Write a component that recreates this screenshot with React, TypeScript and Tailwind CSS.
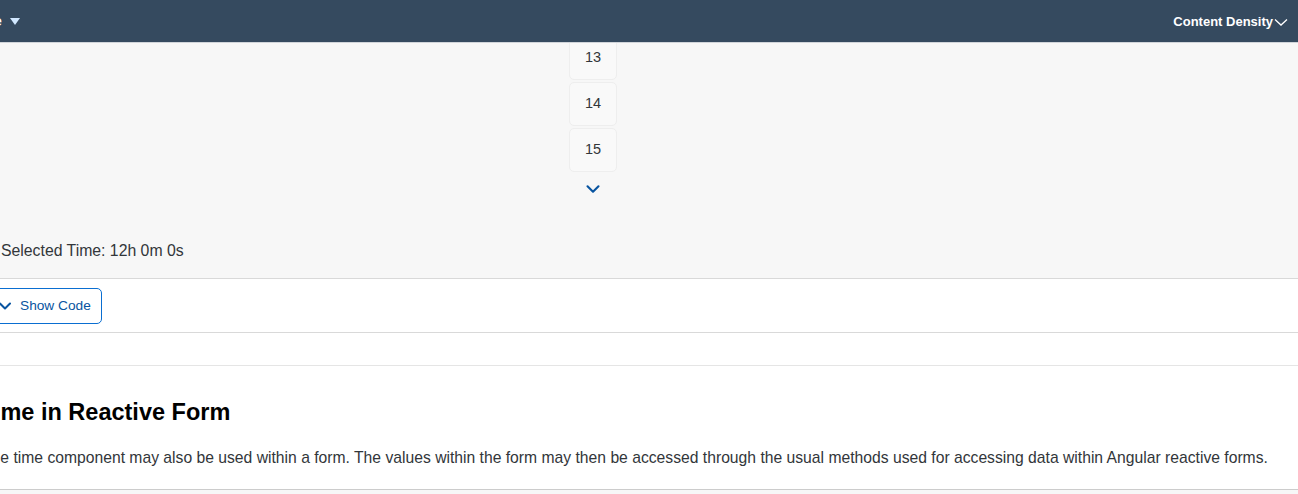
import { ChevronDown } from "lucide-react";

const font = { fontFamily: "'Liberation Sans', Arial, sans-serif" };

function TimeCell({ value, first }: { value: string; first?: boolean }) {
  return (
    <div
      className={`flex h-[44px] w-[48px] items-center justify-center rounded-[5px] border border-[#eeeeee] bg-[#f9f9f9] text-[14.5px] text-[#32363a] ${first ? "-mt-[7px]" : ""}`}
    >
      {value}
    </div>
  );
}

export default function App() {
  return (
    <div className="h-[494px] w-[1298px] overflow-hidden bg-white" style={font}>
      {/* shell bar */}
      <div className="flex h-[43px] items-center justify-between border-b border-[#d1d5da] bg-[#354a5f] text-white">
        <div className="-ml-[6px] flex items-center gap-[8px] text-[14px] font-bold">
          <span>e</span>
          <svg width="10" height="8" viewBox="0 0 10 8" className="mt-[1px]">
            <path d="M0 0 H10 L5 7 Z" fill="#d1e8ff" />
          </svg>
        </div>
        <div className="mr-[10px] mt-[2px] flex items-center text-[13px] font-bold">
          <span>Content Density</span>
          <svg width="14" height="10" viewBox="0 0 14 10" className="ml-[1px]">
            <path d="M1 2.5 L7 8 L13 2.5" fill="none" stroke="white" strokeWidth="1.3" />
          </svg>
        </div>
      </div>

      {/* example area */}
      <div className="h-[236px] overflow-hidden border-b border-[#d9d9d9] bg-[#f7f7f7]">
        <div className="ml-[569px] flex w-[48px] flex-col items-center gap-[2px]">
          <TimeCell value="13" first />
          <TimeCell value="14" />
          <TimeCell value="15" />
          <div className="mt-[5px] flex h-[20px] items-center">
            <ChevronDown size={22} strokeWidth={2.3} className="text-[#0854a0]" />
          </div>
        </div>
        <p className="mt-[40px] pl-[1px] text-[15.8px] text-[#32363a]">Selected Time: 12h 0m 0s</p>
      </div>

      {/* code toggle */}
      <div className="flex h-[54px] items-center border-b border-[#d9d9d9]">
        <button className="-ml-[16px] mt-[1px] flex h-[36px] items-center gap-[5px] rounded-[5px] border border-[#0a6ed1] pl-[10px] pr-[10px] text-[13.7px] text-[#0854a0]">
          <ChevronDown size={20} strokeWidth={2.4} />
          <span>Show Code</span>
        </button>
      </div>

      <div className="h-[33px] border-b border-[#e5e5e5]" />

      {/* next section */}
      <div className="h-[124px] border-b border-[#cccccc]">
        <h2 className="-ml-[20px] pt-[31px] text-[23.5px] font-bold leading-[30px] text-[#000000]">Time in Reactive Form</h2>
        <p className="-ml-[18px] mt-[19px] text-[15.7px] text-[#32363a]">
          The time component may also be used within a form. The values within the form may then be accessed through the usual methods used for accessing data within Angular reactive forms.
        </p>
      </div>
      <div className="h-[10px] bg-[#f7f7f7]" />
    </div>
  );
}
